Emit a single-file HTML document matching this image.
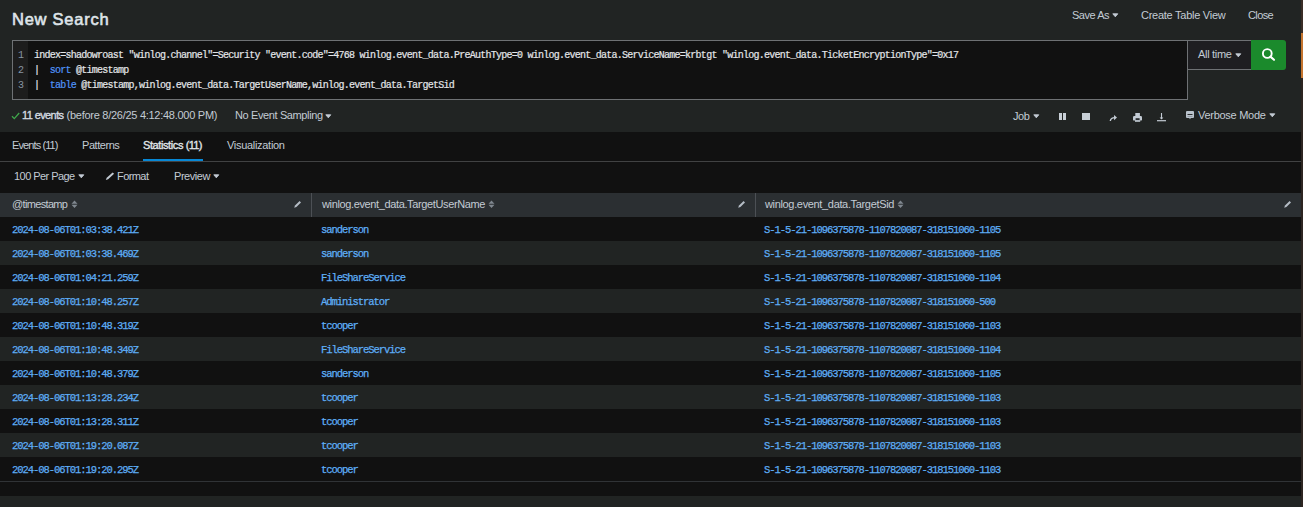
<!DOCTYPE html>
<html><head><meta charset="utf-8">
<style>
*{margin:0;padding:0;box-sizing:border-box}
html,body{width:1303px;height:507px;overflow:hidden;background:#212423;font-family:"Liberation Sans",sans-serif;color:#c3cbd4}
.a{position:absolute;white-space:nowrap}
.t{font-size:11px;line-height:14px}
#title{left:12px;top:8px;font-size:16.5px;line-height:22px;font-weight:normal;-webkit-text-stroke:0.6px #dfe4e9;color:#dfe4e9;letter-spacing:0.75px}
#editor{position:absolute;left:12px;top:40px;width:1176px;height:60px;border:1px solid #6e7174;background:#111111}
#gutter{position:absolute;left:0;top:0;width:15px;height:58px;background:#1d1d1d}
.ln{position:absolute;left:5px;font-size:10px;line-height:15px;color:#8794a4;font-family:"Liberation Mono",monospace}
.code{position:absolute;white-space:pre;left:21px;font-size:10px;line-height:15px;letter-spacing:-0.75px;color:#e3e5e8;-webkit-text-stroke:0.2px #e3e5e8;font-family:"Liberation Mono",monospace}
.kw{color:#5094fa;-webkit-text-stroke:0.2px #5094fa}
#alltime{position:absolute;left:1188px;top:40px;width:63px;height:30px;border-top:1px solid #6e7174;border-bottom:1px solid #6e7174;background:#1e1e21}
#go{position:absolute;left:1251px;top:40px;width:35px;height:30px;background:#1b8a2c;border-radius:0 3px 3px 0}
#tabs{position:absolute;left:0;top:132px;width:1301px;height:30px;background:#111111;border-bottom:1px solid #414243}
#ul{position:absolute;left:143px;top:159px;width:60px;height:2px;background:#0788d6}
#ctrl{position:absolute;left:0;top:162px;width:1301px;height:31px;background:#111111}
#th{position:absolute;left:0;top:193px;width:1301px;height:24px;background:#2b2f32}
.div{position:absolute;top:193px;width:1px;height:24px;background:#4c5055}
.row{position:absolute;left:0;width:1301px;height:24px}
.odd{background:#111111}
.even{background:#212423}
.cell{position:absolute;top:1px;font-family:"Liberation Mono",monospace;font-size:10.5px;line-height:24px;letter-spacing:-1.05px;color:#5eaef6;-webkit-text-stroke:0.25px #5eaef6}
#tail{position:absolute;left:0;top:481px;width:1301px;height:15px;background:#111111;border-top:1px solid #303336}
#sb{position:absolute;left:1301px;top:0;width:2px;height:507px;background:#2d2521}#sbtop{position:absolute;left:1301px;top:0;width:2px;height:33px;background:#3a2d27}
#sbthumb{position:absolute;left:1301px;top:33px;width:2px;height:45px;background:#c4742e}
</style></head><body>
<div id="hdr"></div>
<div id="title" class="a">New Search</div>
<div class="a t" style="left:1072px;top:8px;letter-spacing:-0.47px;">Save As</div><svg class="a" style="left:1112px;top:13px" width="7" height="5"><path d="M0.8 0.8 H5.8 L3.3 3.8Z" fill="#c3cbd4" stroke="#c3cbd4" stroke-width="0.9" stroke-linejoin="round"/></svg>
<div class="a t" style="left:1141px;top:8px;letter-spacing:-0.26px;">Create Table View</div>
<div class="a t" style="left:1248px;top:8px;letter-spacing:-0.6px;">Close</div>

<div id="editor">
  <div id="gutter"></div>
  <div class="ln" style="top:7px">1</div>
  <div class="ln" style="top:22px">2</div>
  <div class="ln" style="top:37px">3</div>
  <div class="code" style="top:7px">index=shadowroast "winlog.channel"=Security "event.code"=4768 winlog.event_data.PreAuthType=0 winlog.event_data.ServiceName=krbtgt "winlog.event_data.TicketEncryptionType"=0x17</div>
  <div class="code" style="top:22px">|  <span class="kw">sort</span> @timestamp</div>
  <div class="code" style="top:37px">|  <span class="kw">table</span> @timestamp,winlog.event_data.TargetUserName,winlog.event_data.TargetSid</div>
</div>
<div id="alltime"><div class="a t" style="left:10px;top:6px;letter-spacing:-0.31px;">All time</div><svg class="a" style="left:47px;top:12px" width="7" height="5"><path d="M0.8 0.8 H5.8 L3.3 3.8Z" fill="#c3cbd4" stroke="#c3cbd4" stroke-width="0.9" stroke-linejoin="round"/></svg></div>
<div id="go"><svg width="35" height="30" style="position:absolute;left:0;top:0"><circle cx="16.3" cy="13.5" r="4.4" fill="none" stroke="#fff" stroke-width="1.9"/><line x1="19.4" y1="16.6" x2="23" y2="19.8" stroke="#fff" stroke-width="2.1" stroke-linecap="round"/></svg></div>

<svg class="a" style="left:11px;top:112px" width="9" height="8"><path d="M1 4.2 L3.3 6.6 L8.2 1" fill="none" stroke="#3fa74b" stroke-width="1.3"/></svg>
<div class="a t" style="left:22px;top:108px"><span style="color:#d5dbe1;letter-spacing:-0.6px;-webkit-text-stroke:0.35px #d5dbe1">11 events</span> <span style="letter-spacing:-0.27px">(before 8/26/25 4:12:48.000 PM)</span></div>
<div class="a t" style="left:235px;top:108px;letter-spacing:-0.38px;">No Event Sampling</div><svg class="a" style="left:325px;top:114px" width="7" height="5"><path d="M0.8 0.8 H5.8 L3.3 3.8Z" fill="#c3cbd4" stroke="#c3cbd4" stroke-width="0.9" stroke-linejoin="round"/></svg>

<div class="a t" style="left:1013px;top:109px;letter-spacing:-0.4px;">Job</div><svg class="a" style="left:1033px;top:114px" width="7" height="5"><path d="M0.8 0.8 H5.8 L3.3 3.8Z" fill="#c3cbd4" stroke="#c3cbd4" stroke-width="0.9" stroke-linejoin="round"/></svg>
<div class="a" style="left:1059px;top:113px;width:3px;height:7px;background:#c8cfd6"></div>
<div class="a" style="left:1063px;top:113px;width:3px;height:7px;background:#c8cfd6"></div>
<div class="a" style="left:1082px;top:113px;width:8px;height:7px;background:#c8cfd6"></div>
<svg class="a" style="left:1109px;top:114px" width="9" height="8"><path d="M1.3 7 Q1.8 3.6 5.8 3.6" fill="none" stroke="#c3cbd4" stroke-width="1.4"/><path d="M5 1 L8 3.6 L5 6.2Z" fill="#c3cbd4"/></svg>
<svg class="a" style="left:1133px;top:113px" width="9" height="9"><rect x="2.3" y="0" width="4.6" height="3.2" fill="#c3cbd4"/><rect x="0" y="3" width="9" height="4.6" rx="1.2" fill="#c3cbd4"/><rect x="2.6" y="5.2" width="4" height="2" fill="#2a2d30"/><rect x="2" y="7.2" width="5.2" height="1.6" fill="#c3cbd4"/></svg>
<svg class="a" style="left:1157px;top:113px" width="9" height="9"><path d="M4.5 0 V6" fill="none" stroke="#c3cbd4" stroke-width="1.1"/><path d="M2.6 4.4 L4.5 6.4 L6.4 4.4Z" fill="#c3cbd4"/><path d="M0 7.7 H9" stroke="#c3cbd4" stroke-width="1.2"/></svg>
<svg class="a" style="left:1186px;top:111px" width="9" height="9"><rect x="0" y="0" width="8" height="7" rx="1" fill="#b9c2cb"/><path d="M1.5 3.5 H6.5" stroke="#2a2d2f" stroke-width="1"/><path d="M1.5 5.5 H6.5" stroke="#8d959d" stroke-width="0.8"/><path d="M3 6.8 L4 8.2 L5 6.8Z" fill="#b9c2cb"/></svg>
<div class="a t" style="left:1198px;top:108px;letter-spacing:-0.28px;">Verbose Mode</div><svg class="a" style="left:1269px;top:113px" width="7" height="5"><path d="M0.8 0.8 H5.8 L3.3 3.8Z" fill="#c3cbd4" stroke="#c3cbd4" stroke-width="0.9" stroke-linejoin="round"/></svg>

<div id="tabs"></div>
<div class="a t" style="left:12px;top:138px;letter-spacing:-0.9px;">Events (11)</div>
<div class="a t" style="left:82px;top:138px;letter-spacing:-0.45px;">Patterns</div>
<div class="a t" style="left:143px;top:138px;color:#e1e6ea;-webkit-text-stroke:0.35px #e1e6ea"><span style="letter-spacing:-0.4px">Statistics</span><span style="letter-spacing:-0.4px"> </span><span style="letter-spacing:-0.7px">(11)</span></div>
<div class="a t" style="left:227px;top:138px;letter-spacing:-0.3px;">Visualization</div>
<div id="ul"></div>

<div id="ctrl"></div>
<div class="a t" style="left:14px;top:169px;letter-spacing:-0.55px;">100 Per Page</div><svg class="a" style="left:78px;top:174px" width="7" height="5"><path d="M0.8 0.8 H5.8 L3.3 3.8Z" fill="#c3cbd4" stroke="#c3cbd4" stroke-width="0.9" stroke-linejoin="round"/></svg>
<svg class="a" style="left:105px;top:172px" width="10" height="9"><path d="M0.8 8 L1.7 5.7 L7.6 0.4 L9.1 1.8 L3.1 7.2 Z" fill="#c3cbd4"/></svg>
<div class="a t" style="left:117px;top:169px;letter-spacing:-0.58px;">Format</div>
<div class="a t" style="left:174px;top:169px;letter-spacing:-0.45px;">Preview</div><svg class="a" style="left:213px;top:174px" width="7" height="5"><path d="M0.8 0.8 H5.8 L3.3 3.8Z" fill="#c3cbd4" stroke="#c3cbd4" stroke-width="0.9" stroke-linejoin="round"/></svg>

<div id="th"></div>
<div class="div" style="left:311px"></div>
<div class="div" style="left:755px"></div>
<div class="a t" style="left:12px;top:197px;letter-spacing:-0.66px;">@timestamp</div><svg class="a" style="left:71px;top:200px" width="7" height="9"><path d="M0.5 3.8 L3.5 0.6 L6.5 3.8Z M0.5 4.8 L3.5 8 L6.5 4.8Z" fill="#7f878f"/></svg><svg class="a" style="left:293px;top:200px" width="9" height="9"><path d="M1.2 7.8 L2 5.6 L6.6 1 L8 2.4 L3.4 7 Z" fill="#b5bdc6"/></svg>
<div class="a t" style="left:322px;top:197px;letter-spacing:-0.37px;">winlog.event_data.TargetUserName</div><svg class="a" style="left:488px;top:200px" width="7" height="9"><path d="M0.5 3.8 L3.5 0.6 L6.5 3.8Z M0.5 4.8 L3.5 8 L6.5 4.8Z" fill="#7f878f"/></svg><svg class="a" style="left:737px;top:200px" width="9" height="9"><path d="M1.2 7.8 L2 5.6 L6.6 1 L8 2.4 L3.4 7 Z" fill="#b5bdc6"/></svg>
<div class="a t" style="left:765px;top:197px;letter-spacing:-0.34px;">winlog.event_data.TargetSid</div><svg class="a" style="left:897px;top:200px" width="7" height="9"><path d="M0.5 3.8 L3.5 0.6 L6.5 3.8Z M0.5 4.8 L3.5 8 L6.5 4.8Z" fill="#7f878f"/></svg><svg class="a" style="left:1283px;top:200px" width="9" height="9"><path d="M1.2 7.8 L2 5.6 L6.6 1 L8 2.4 L3.4 7 Z" fill="#b5bdc6"/></svg>

<div id="rows">
<div class="row odd" style="top:217px"><div class="cell" style="left:12px">2024-08-06T01:03:38.421Z</div><div class="cell" style="left:321px">sanderson</div><div class="cell" style="left:764px">S-1-5-21-1096375878-1107820087-318151060-1105</div></div>
<div class="row even" style="top:241px"><div class="cell" style="left:12px">2024-08-06T01:03:38.469Z</div><div class="cell" style="left:321px">sanderson</div><div class="cell" style="left:764px">S-1-5-21-1096375878-1107820087-318151060-1105</div></div>
<div class="row odd" style="top:265px"><div class="cell" style="left:12px">2024-08-06T01:04:21.259Z</div><div class="cell" style="left:321px">FileShareService</div><div class="cell" style="left:764px">S-1-5-21-1096375878-1107820087-318151060-1104</div></div>
<div class="row even" style="top:289px"><div class="cell" style="left:12px">2024-08-06T01:10:48.257Z</div><div class="cell" style="left:321px">Administrator</div><div class="cell" style="left:764px">S-1-5-21-1096375878-1107820087-318151060-500</div></div>
<div class="row odd" style="top:313px"><div class="cell" style="left:12px">2024-08-06T01:10:48.319Z</div><div class="cell" style="left:321px">tcooper</div><div class="cell" style="left:764px">S-1-5-21-1096375878-1107820087-318151060-1103</div></div>
<div class="row even" style="top:337px"><div class="cell" style="left:12px">2024-08-06T01:10:48.349Z</div><div class="cell" style="left:321px">FileShareService</div><div class="cell" style="left:764px">S-1-5-21-1096375878-1107820087-318151060-1104</div></div>
<div class="row odd" style="top:361px"><div class="cell" style="left:12px">2024-08-06T01:10:48.379Z</div><div class="cell" style="left:321px">sanderson</div><div class="cell" style="left:764px">S-1-5-21-1096375878-1107820087-318151060-1105</div></div>
<div class="row even" style="top:385px"><div class="cell" style="left:12px">2024-08-06T01:13:28.234Z</div><div class="cell" style="left:321px">tcooper</div><div class="cell" style="left:764px">S-1-5-21-1096375878-1107820087-318151060-1103</div></div>
<div class="row odd" style="top:409px"><div class="cell" style="left:12px">2024-08-06T01:13:28.311Z</div><div class="cell" style="left:321px">tcooper</div><div class="cell" style="left:764px">S-1-5-21-1096375878-1107820087-318151060-1103</div></div>
<div class="row even" style="top:433px"><div class="cell" style="left:12px">2024-08-06T01:19:20.087Z</div><div class="cell" style="left:321px">tcooper</div><div class="cell" style="left:764px">S-1-5-21-1096375878-1107820087-318151060-1103</div></div>
<div class="row odd" style="top:457px"><div class="cell" style="left:12px">2024-08-06T01:19:20.295Z</div><div class="cell" style="left:321px">tcooper</div><div class="cell" style="left:764px">S-1-5-21-1096375878-1107820087-318151060-1103</div></div>
</div>
<div id="tail"></div>
<div id="sb"></div><div id="sbtop"></div><div id="sbthumb"></div>
</body></html>
